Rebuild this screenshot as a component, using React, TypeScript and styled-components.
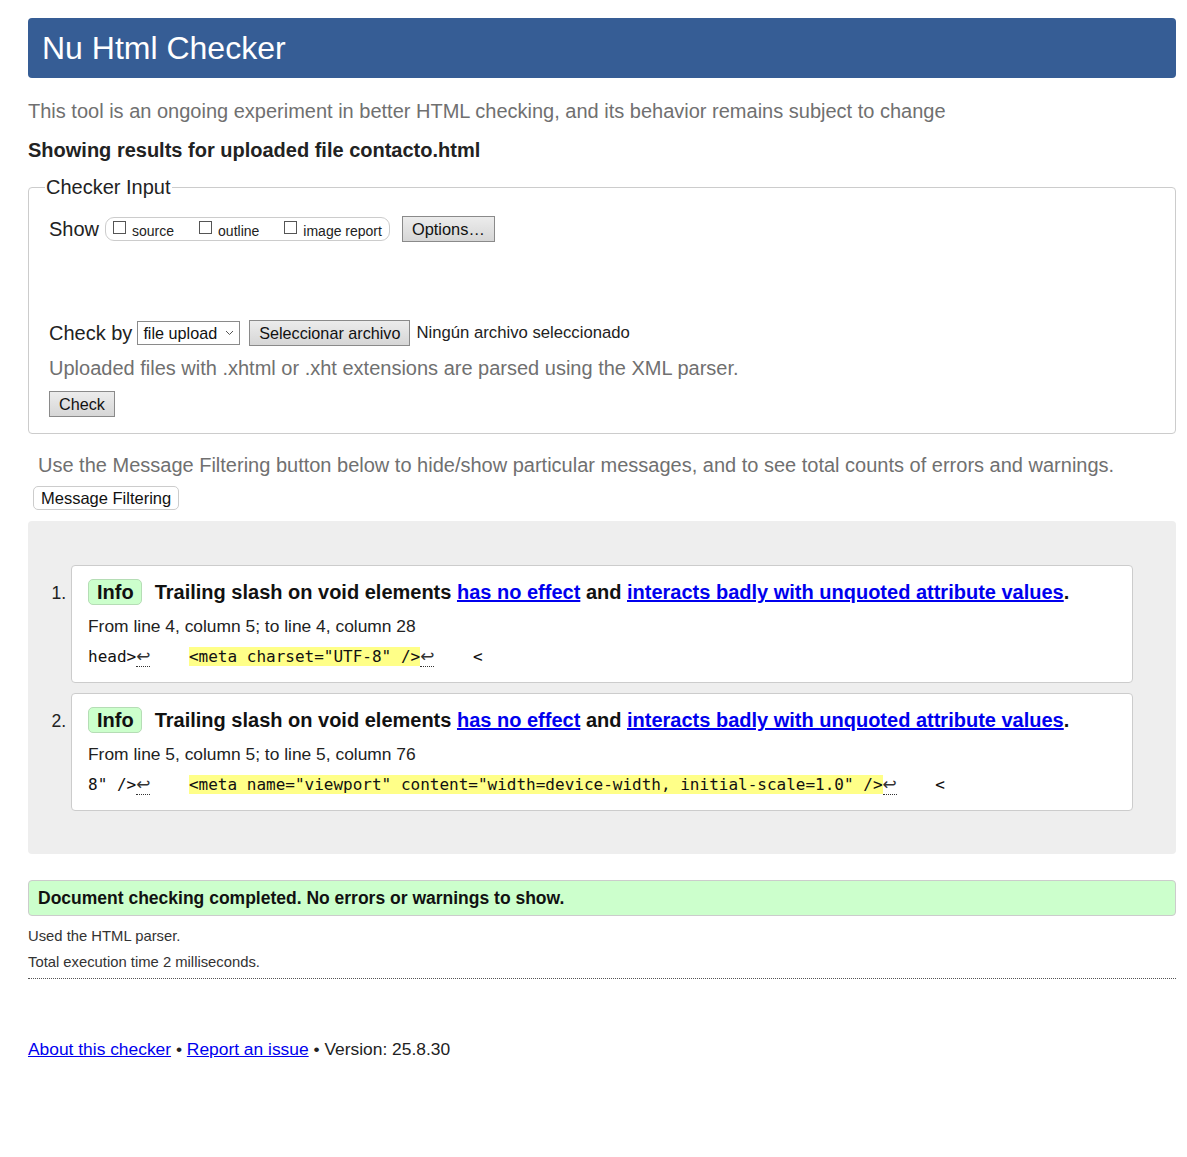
import React from "react";
import styled, { createGlobalStyle } from "styled-components";

const GlobalStyle = createGlobalStyle`
  body {
    margin: 0;
    background: #fff;
    color: #222;
    font-family: "Liberation Sans", Arial, sans-serif;
  }
`;

interface IMessage {
  from: string;
  before: string;
  highlight: string;
}

const messages: IMessage[] = [
  {
    from: "From line 4, column 5; to line 4, column 28",
    before: "head>",
    highlight: '<meta charset="UTF-8" />',
  },
  {
    from: "From line 5, column 5; to line 5, column 76",
    before: '8" />',
    highlight: '<meta name="viewport" content="width=device-width, initial-scale=1.0" />',
  },
];

const Chevron = () => (
  <svg width="9" height="6" viewBox="0 0 9 6">
    <path d="M1 1l3.5 3.5L8 1" fill="none" stroke="#555" strokeWidth="1" />
  </svg>
);

const App: React.FC = () => {
  return (
    <Page>
      <GlobalStyle />
      <Header>Nu Html Checker</Header>
      <Intro>This tool is an ongoing experiment in better HTML checking, and its behavior remains subject to change</Intro>
      <ResultsTitle>Showing results for uploaded file contacto.html</ResultsTitle>

      <Fieldset>
        <Legend>Checker Input</Legend>
        <Row>
          <Label>Show</Label>
          <ShowGroup>
            <CheckItem><Box />source</CheckItem>
            <CheckItem><Box />outline</CheckItem>
            <CheckItem><Box />image report</CheckItem>
          </ShowGroup>
          <GrayButton wide>Options…</GrayButton>
        </Row>
        <Row spaced>
          <Label>Check by</Label>
          <FakeSelect>file upload <Chevron /></FakeSelect>
          <GrayButton>Seleccionar archivo</GrayButton>
          <FileName>Ningún archivo seleccionado</FileName>
        </Row>
        <Hint>Uploaded files with .xhtml or .xht extensions are parsed using the XML parser.</Hint>
        <GrayButton>Check</GrayButton>
      </Fieldset>

      <FilterNote>Use the Message Filtering button below to hide/show particular messages, and to see total counts of errors and warnings.</FilterNote>
      <FilterButton>Message Filtering</FilterButton>

      <Results>
        <MessageList>
          {messages.map((m) => (
            <Message key={m.from}>
              <Title>
                <Badge>Info</Badge>
                Trailing slash on void elements <a href="#">has no effect</a> and{" "}
                <a href="#">interacts badly with unquoted attribute values</a>.
              </Title>
              <Location>{m.from}</Location>
              <Extract>
                {m.before}
                <Lf>↩</Lf>
                {"    "}
                <Highlight>{m.highlight}</Highlight>
                <Lf>↩</Lf>
                {"    <"}
              </Extract>
            </Message>
          ))}
        </MessageList>
      </Results>

      <Success>Document checking completed. No errors or warnings to show.</Success>
      <Small>Used the HTML parser.</Small>
      <Small>Total execution time 2 milliseconds.</Small>
      <Rule />

      <Footer>
        <a href="#">About this checker</a> • <a href="#">Report an issue</a> • Version: 25.8.30
      </Footer>
    </Page>
  );
};

export default App;


const Page = styled.div`
  padding: 18px 11px 80px 28px;

  a {
    color: #00e;
  }
`;

const Header = styled.h1`
  margin: 0;
  height: 60px;
  line-height: 60px;
  padding-left: 14px;
  background: #365d95;
  color: #fff;
  border-radius: 4px;
  font-size: 32px;
  font-weight: normal;
`;

const Intro = styled.p`
  margin: 22px 0 0;
  font-size: 20px;
  line-height: 23px;
  color: #707070;
`;

const ResultsTitle = styled.p`
  margin: 16px 0 0;
  font-size: 20px;
  line-height: 23px;
  font-weight: bold;
  color: #222;
`;

const Fieldset = styled.fieldset`
  margin: 14px 0 0;
  padding: 17px 20px 16px;
  border: 1px solid #ccc;
  border-radius: 4px;
`;

const Legend = styled.legend`
  margin-left: -4px;
  padding: 0 1px;
  font-size: 20px;
  line-height: 23px;
  color: #222;
`;

const Row = styled.div<{ spaced?: boolean }>`
  display: flex;
  align-items: center;
  gap: 6px;
  height: 26px;
  margin-top: ${({ spaced }) => (spaced ? "78px" : "0")};
  margin-bottom: ${({ spaced }) => (spaced ? "10px" : "0")};
`;

const Label = styled.span`
  font-size: 20px;
  color: #222;
`;

const ShowGroup = styled.span`
  display: flex;
  align-items: center;
  gap: 25px;
  height: 22px;
  padding: 0 7px;
  border: 1px solid #ccc;
  border-radius: 9px;
  margin-right: 6px;
`;

const CheckItem = styled.span`
  display: flex;
  align-items: center;
  gap: 6px;
  font-size: 14px;
  color: #222;
  padding-top: 3px;
`;

const Box = styled.span`
  width: 13px;
  height: 13px;
  border: 1px solid #555;
  box-sizing: border-box;
  margin-top: -6px;
`;

const GrayButton = styled.button<{ wide?: boolean }>`
  font-family: "Liberation Sans", Arial, sans-serif;
  font-size: ${({ wide }) => (wide ? "16.4px" : "16.2px")};
  color: #111;
  height: 26px;
  padding: 0 9px;
  border: 1px solid #8a8a8a;
  border-radius: 0;
  background: linear-gradient(#ececec, #d6d6d6);
`;

const FakeSelect = styled.span`
  display: flex;
  align-items: center;
  gap: 8px;
  height: 22px;
  padding: 0 5px;
  border: 1px solid #8a8a8a;
  font-size: 16.2px;
  color: #111;
  margin-left: -1px;
  margin-right: 3px;
`;

const FileName = styled.span`
  font-size: 16.7px;
  color: #222;
`;

const Hint = styled.p`
  margin: 0 0 11px;
  font-size: 20px;
  line-height: 24px;
  color: #707070;
`;

const FilterNote = styled.p`
  margin: 20px 0 0 10px;
  font-size: 20px;
  line-height: 23px;
  color: #707070;
`;

const FilterButton = styled.button`
  margin: 9px 0 0 5px;
  height: 24px;
  padding: 0 7px;
  font-family: "Liberation Sans", Arial, sans-serif;
  font-size: 16.5px;
  color: #111;
  background: #fff;
  border: 1px solid #ccc;
  border-radius: 5px;
`;

const Results = styled.div`
  margin-top: 11px;
  padding: 44px 43px 43px;
  background: #eee;
  border-radius: 4px;
`;

const MessageList = styled.ol`
  margin: 0;
  padding: 0;
  display: flex;
  flex-direction: column;
  gap: 10px;
`;

const Message = styled.li`
  padding: 12px 17px 14px 16px;
  background: #fff;
  border: 1px solid #ccc;
  border-radius: 4px;
  font-size: 17.6px;
  color: #222;

  &::marker {
    font-size: 17.6px;
  }
`;

const Title = styled.p`
  margin: 0;
  font-size: 20px;
  line-height: 28px;
  font-weight: bold;
  color: #111;
`;

const Badge = styled.span`
  display: inline-block;
  padding: 0 7px 0 8px;
  margin-right: 13px;
  line-height: 24px;
  background: #cfc;
  border: 1px solid #b5ddb5;
  border-radius: 5px;
`;

const Location = styled.p`
  margin: 9px 0 0;
  font-size: 17.4px;
  line-height: 22px;
`;

const Extract = styled.code`
  display: block;
  margin-top: 8px;
  white-space: pre;
  font-family: "DejaVu Sans Mono", "Liberation Mono", monospace;
  font-size: 16px;
  line-height: 22px;
  color: #111;
`;

const Highlight = styled.span`
  background: #ff8;
`;

const Lf = styled.span`
  font-family: "DejaVu Sans", sans-serif;
  font-size: 17px;
  color: #333;
  border-bottom: 1px dotted #333;
`;

const Success = styled.p`
  margin: 26px 0 0;
  padding: 6px 9px;
  background: #cfc;
  border: 1px solid #ccc;
  border-radius: 4px;
  font-size: 17.5px;
  line-height: 22px;
  font-weight: bold;
  color: #111;
`;

const Small = styled.p`
  margin: 12px 0 0;
  font-size: 14.8px;
  line-height: 17px;
  color: #333;

  & + & {
    margin-top: 9px;
  }
`;

const Rule = styled.hr`
  margin: 7px 0 0;
  border: 0;
  border-top: 1px dotted #555;
`;

const Footer = styled.p`
  margin: 59px 0 0;
  font-size: 17.4px;
  line-height: 22px;
  color: #222;
`;
